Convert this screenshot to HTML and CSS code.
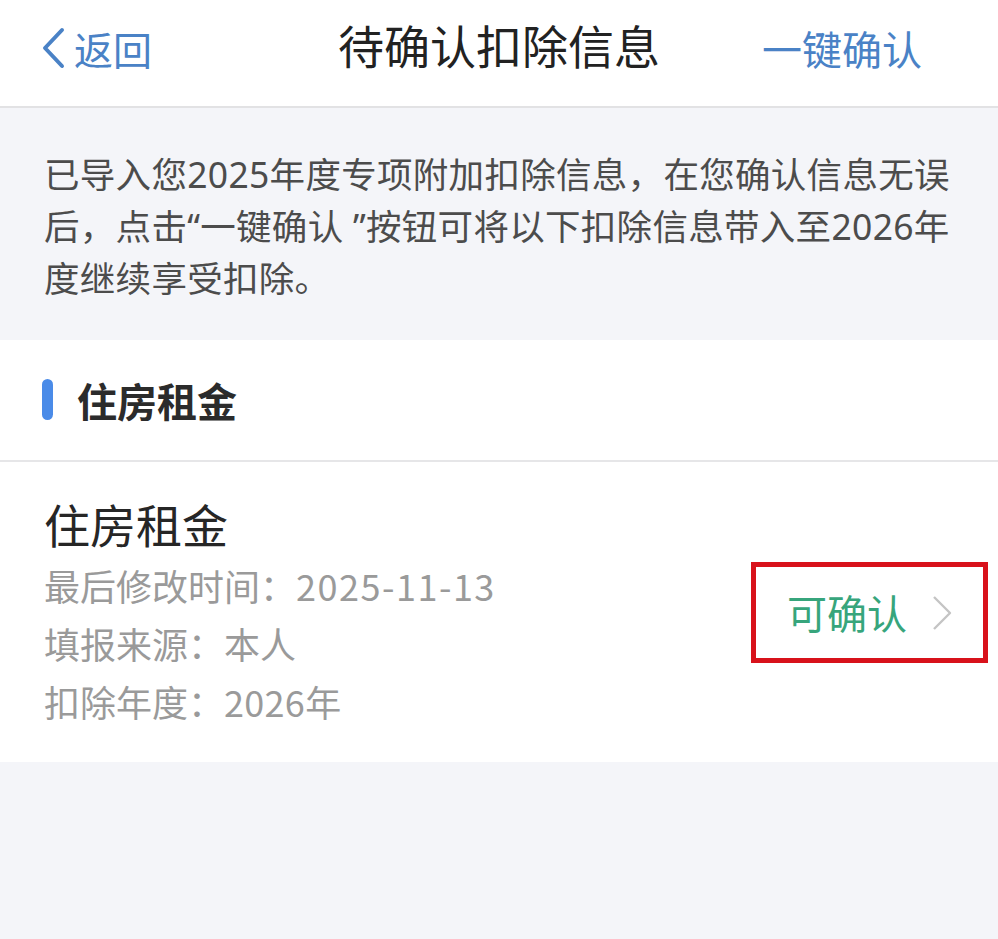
FILE: index.html
```html
<!DOCTYPE html>
<html lang="zh-CN">
<head>
<meta charset="utf-8">
<title>待确认扣除信息</title>
<link rel="stylesheet" href="styles.css">
</head>
<body>
<div class="page">
  <header class="nav">
    <div class="nav-back">
      <svg class="back-icon" width="26" height="42" viewBox="0 0 26 42"><polyline points="22,3 5,21 22,39" fill="none" stroke="#4a82c6" stroke-width="4" stroke-linecap="round" stroke-linejoin="round"/></svg>
      <span>返回</span>
    </div>
    <div class="nav-title">待确认扣除信息</div>
    <div class="nav-action">一键确认</div>
  </header>

  <section class="notice">
    已导入您2025年度专项附加扣除信息，在您确认信息无误后，点击“一键确认 ”按钮可将以下扣除信息带入至2026年度继续享受扣除。
  </section>

  <section class="card">
    <div class="card-head">
      <span class="bar"></span>
      <span class="card-title">住房租金</span>
    </div>
    <div class="item">
      <div class="item-info">
        <div class="item-name">住房租金</div>
        <div class="item-meta">最后修改时间：<span class="num">2025-11-13</span></div>
        <div class="item-meta">填报来源：本人</div>
        <div class="item-meta">扣除年度：<span class="num2">2026</span>年</div>
      </div>
      <div class="item-status">
        <span>可确认</span>
        <svg class="chev" width="22" height="36" viewBox="0 0 22 36"><polyline points="3,2 19,18 3,34" fill="none" stroke="#c4c4c4" stroke-width="2.4" stroke-linejoin="round"/></svg>
      </div>
    </div>
  </section>
</div>
</body>
</html>
```
FILE: styles.css
```css
* { box-sizing: border-box; }
html, body { margin: 0; padding: 0; }
body {
  background: #f4f5f9;
  font-family: "Noto Sans CJK SC", "Noto Sans", sans-serif;
  width: 998px;
  min-height: 939px;
}
.page { width: 998px; }
.nav {
  height: 108px;
  background: #fff;
  border-bottom: 2px solid #e2e2e4;
  display: flex;
  align-items: center;
  justify-content: space-between;
  padding: 0 76px 10px 40px;
  position: relative;
}
.nav-back {
  display: flex;
  align-items: center;
  color: #4a82c6;
  font-size: 39px;
  gap: 8px;
}
.nav-title {
  position: absolute;
  left: 0; right: 0;
  text-align: center;
  font-size: 46px;
  color: #222;
  top: 11px;
  pointer-events: none;
}
.nav-action {
  color: #4a82c6;
  font-size: 40px;
}
.notice {
  padding: 40px 40px 36px 44px;
  font-family: "Noto Sans", "Noto Sans CJK SC", sans-serif;
  font-size: 35.5px;
  line-height: 52px;
  color: #4c4c4c;
  letter-spacing: 0.3px;
}
.card {
  background: #fff;
}
.card-head {
  height: 122px;
  display: flex;
  align-items: center;
  padding-left: 42px;
  border-bottom: 2px solid #e6e6e8;
}
.bar {
  width: 11px;
  height: 41px;
  border-radius: 6px;
  background: #4a8be8;
  margin-right: 24px;
  margin-top: -2px;
}
.card-title {
  font-size: 40px;
  font-weight: 700;
  color: #2b2b2b;
}
.item {
  height: 300px;
  display: flex;
  align-items: center;
  justify-content: space-between;
  padding: 0 10px 0 44px;
}
.item-name {
  font-size: 46px;
  color: #262626;
  line-height: 58px;
  margin-bottom: 4px;
}
.item-meta {
  font-size: 36px;
  color: #9a9a9a;
  line-height: 58px;
}
.num { letter-spacing: 1.5px; }
.num2 { letter-spacing: 0.3px; }
.item-status {
  display: flex;
  align-items: center;
  border: 5px solid #d8121b;
  width: 237px;
  height: 101px;
  padding: 0 30px 0 31px;
  justify-content: space-between;
}
.item-status span {
  color: #37a57c;
  font-size: 40px;
}
.chev { margin-top: 2px; }
```
